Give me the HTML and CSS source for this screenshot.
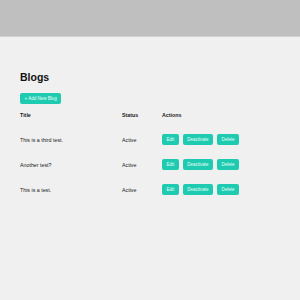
FILE: index.html
```html
<!DOCTYPE html>
<html lang="en">
<head>
  <meta charset="UTF-8" />
  <meta name="viewport" content="width=device-width, initial-scale=1.0"/>
  <title>Blogs</title>
  <link rel="stylesheet" href="styles.css">
</head>
<body>
  <header class="topbar"></header>
  <main class="content">
    <h1>Blogs</h1>
    <button class="btn add-button">+ Add New Blog</button>

    <div class="blog-table">
      <div class="row head">
        <div>Title</div>
        <div>Status</div>
        <div>Actions</div>
      </div>
      <div class="row">
        <div>This is a third test.</div>
        <div>Active</div>
        <div class="actions">
          <button class="btn">Edit</button>
          <button class="btn">Deactivate</button>
          <button class="btn">Delete</button>
        </div>
      </div>
      <div class="row">
        <div>Another test?</div>
        <div>Active</div>
        <div class="actions">
          <button class="btn">Edit</button>
          <button class="btn">Deactivate</button>
          <button class="btn">Delete</button>
        </div>
      </div>
      <div class="row">
        <div>This is a test.</div>
        <div>Active</div>
        <div class="actions">
          <button class="btn">Edit</button>
          <button class="btn">Deactivate</button>
          <button class="btn">Delete</button>
        </div>
      </div>
    </div>
  </main>
</body>
</html>
```

FILE: styles.css
```css
* {
  box-sizing: border-box;
}

body {
  margin: 0;
  padding: 0;
  background: #f0f0f0;
  font-family: 'Liberation Sans', Arial, sans-serif;
  color: #1a1a1a;
  height: 300px;
}

.topbar {
  height: 37px;
  background: #bfbfbf;
  border-bottom: 1px solid #d2d2d2;
}

.content {
  padding: 0 20px;
}

h1 {
  margin: 33.5px 0 0;
  font-size: 10.5px;
  line-height: 13px;
  font-weight: bold;
  color: #111;
}

.btn {
  height: 11.5px;
  padding: 0 4.5px;
  margin: 0;
  border: none;
  border-radius: 2px;
  background-color: #1ecbb0;
  color: #e8fffa;
  font-family: 'Liberation Sans', Arial, sans-serif;
  font-size: 4.5px;
  line-height: 11.5px;
  cursor: pointer;
}

.add-button {
  margin-top: 9px;
  display: block;
}

.blog-table {
  font-size: 5.3px;
}

.row {
  display: grid;
  grid-template-columns: 102px 40px auto;
  align-items: center;
  height: 25px;
}

.row.head {
  height: 21px;
  margin-bottom: 2px;
  font-weight: bold;
}

.actions {
  display: flex;
  gap: 4px;
}
```
